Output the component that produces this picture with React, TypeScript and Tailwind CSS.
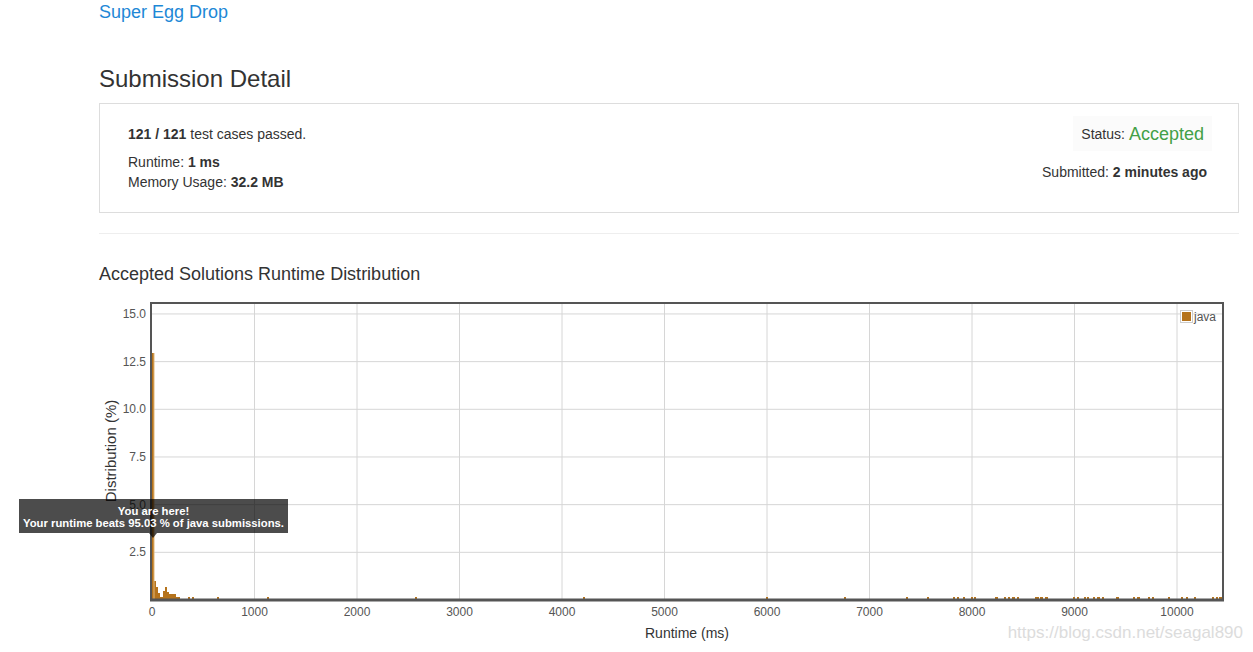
import React from "react";

// page coords for chart: 0ms at x=152, 1000ms every 102.5px; 0% at y=600, 19.07px per %
const xOf = (ms: number) => 152 + ms * 0.1025;
const yOf = (pct: number) => 600 - pct * 19.07;

const yTicks = [2.5, 5, 7.5, 10, 12.5, 15];
const xTicks = [0, 1000, 2000, 3000, 4000, 5000, 6000, 7000, 8000, 9000, 10000];

// [pageX, topY, width]
const bars: [number, number, number][] = [
  [151, 353, 3],
  [154, 581, 2],
  [156, 587, 2],
  [158, 593, 2],
  [160, 597, 3],
  [163, 591, 2],
  [165, 587, 2],
  [167, 592, 2],
  [169, 594, 4],
  [173, 594, 3],
  [176, 597, 4],
  [188, 597, 2],
  [192, 597, 2],
  [217, 597, 2],
  [267, 597, 2],
  [415, 597, 2],
  [583, 597, 2],
  [766, 597, 2],
  [844, 597, 2],
  [906, 597, 2],
  [927, 597, 2],
  [953, 597, 2],
  [957, 597, 2],
  [963, 597, 2],
  [971, 597, 2],
  [974, 597, 2],
  [995, 597, 3],
  [1004, 597, 2],
  [1008, 597, 2],
  [1012, 597, 3],
  [1017, 597, 2],
  [1035, 597, 4],
  [1040, 597, 3],
  [1045, 597, 3],
  [1073, 597, 2],
  [1077, 597, 2],
  [1084, 597, 2],
  [1087, 597, 2],
  [1093, 597, 2],
  [1097, 597, 3],
  [1102, 597, 2],
  [1116, 597, 3],
  [1133, 597, 2],
  [1137, 597, 3],
  [1148, 597, 2],
  [1152, 597, 2],
  [1168, 597, 2],
  [1181, 597, 2],
  [1186, 597, 2],
  [1194, 597, 2],
  [1212, 597, 2],
  [1216, 597, 2],
  [1219, 597, 3],
];

const BAR = "#b5731c";

const RuntimeChart: React.FC = () => (
  <div className="relative mt-[9px] h-[357px] w-[1154px]">
    <svg width={1154} height={357} className="block">
      <g transform="translate(-99,-295)" fontFamily="'Liberation Sans', Arial, sans-serif">
        {/* grid */}
        {yTicks.map((t) => (
          <line key={t} x1={151} x2={1223} y1={yOf(t)} y2={yOf(t)} stroke="#d6d6d6" strokeWidth={1} />
        ))}
        {xTicks.slice(1).map((t) => (
          <line key={t} x1={xOf(t)} x2={xOf(t)} y1={302} y2={600} stroke="#d6d6d6" strokeWidth={1} />
        ))}

        {/* bars */}
        {bars.map(([x, top, w], i) => (
          <rect key={i} x={x} y={top} width={w} height={600 - top} fill={BAR} />
        ))}
        <rect x={153.5} y={353} width={1} height={247} fill="#e2b77a" />

        {/* frame */}
        <rect x={151} y={303} width={1072} height={297} fill="none" stroke="#555" strokeWidth={2} />
        <line x1={150} x2={1224} y1={600} y2={600} stroke="#555" strokeWidth={3} />

        {/* y ticks */}
        {yTicks.map((t) => (
          <text key={t} x={146} y={yOf(t) + 4} textAnchor="end" fontSize={12} fill="#555">
            {t.toFixed(1)}
          </text>
        ))}
        {/* x ticks */}
        {xTicks.map((t) => (
          <text key={t} x={xOf(t)} y={616} textAnchor="middle" fontSize={12} fill="#555">
            {t}
          </text>
        ))}

        <text x={687} y={638} textAnchor="middle" fontSize={14} fill="#333">
          Runtime (ms)
        </text>
        <text
          x={0}
          y={0}
          transform="translate(116,451) rotate(-90)"
          textAnchor="middle"
          fontSize={15}
          fill="#333"
        >
          Distribution (%)
        </text>

        {/* legend */}
        <rect x={1180.5} y={310.5} width={12} height={12} fill="#fff" stroke="#ccc" strokeWidth={1} />
        <rect x={1182} y={312} width={9} height={9} fill={BAR} />
        <text x={1194} y={321} fontSize={12} fill="#545454">
          java
        </text>
      </g>
    </svg>

    {/* tooltip */}
    <div className="absolute left-[-80px] top-[204px] h-[34px] w-[269px] whitespace-nowrap bg-black/70 pt-[6px] text-center text-[11.3px] font-bold leading-[12px] text-white">
      <div>You are here!</div>
      <div>Your runtime beats 95.03 % of java submissions.</div>
      <div className="absolute left-[130px] top-[34px] h-0 w-0 border-x-[4px] border-t-[5px] border-x-transparent border-t-black/70" />
    </div>
  </div>
);

export default function App() {
  return (
    <div
      className="relative h-[652px] w-full overflow-hidden bg-white text-[#333]"
      style={{ fontFamily: "'Liberation Sans', Arial, Helvetica, sans-serif" }}
    >
      <div className="w-[1239px] pl-[99px]">
        <a className="block h-[24px] text-[18px] leading-[24px] text-[#1e88d6]">Super Egg Drop</a>

        <h3 className="mt-[40px] text-[24px] leading-[30px] text-[#333]">Submission Detail</h3>

        <div className="mt-[9px] flex h-[110px] justify-between border border-[#ddd]">
          <div className="pl-[28px] pt-[20px] text-[14px] leading-[20px]">
            <div>
              <strong>121 / 121</strong> test cases passed.
            </div>
            <div className="mt-[8px]">
              Runtime: <strong>1 ms</strong>
            </div>
            <div>
              Memory Usage: <strong>32.2 MB</strong>
            </div>
          </div>
          <div className="flex flex-col items-end pr-[26px] pt-[12px] text-[14px] leading-[20px]">
            <div className="flex h-[35px] items-center bg-[#fbfbfb] px-[8px]">
              <span>Status:</span>
              <span className="ml-[4px] text-[18px] text-[#43a047]">Accepted</span>
            </div>
            <div className="mt-[11px] pr-[5px]">
              Submitted: <strong>2 minutes ago</strong>
            </div>
          </div>
        </div>

        <div className="mt-[20px] h-px bg-[#eee]" />

        <h4 className="mt-[28px] text-[18px] leading-[24px] text-[#333]">Accepted Solutions Runtime Distribution</h4>

        <RuntimeChart />
      </div>

      <div className="absolute right-[10px] top-[622px] text-[17px] leading-[22px] text-[#dcdcdc]">
        https://blog.csdn.net/seagal890
      </div>
    </div>
  );
}
